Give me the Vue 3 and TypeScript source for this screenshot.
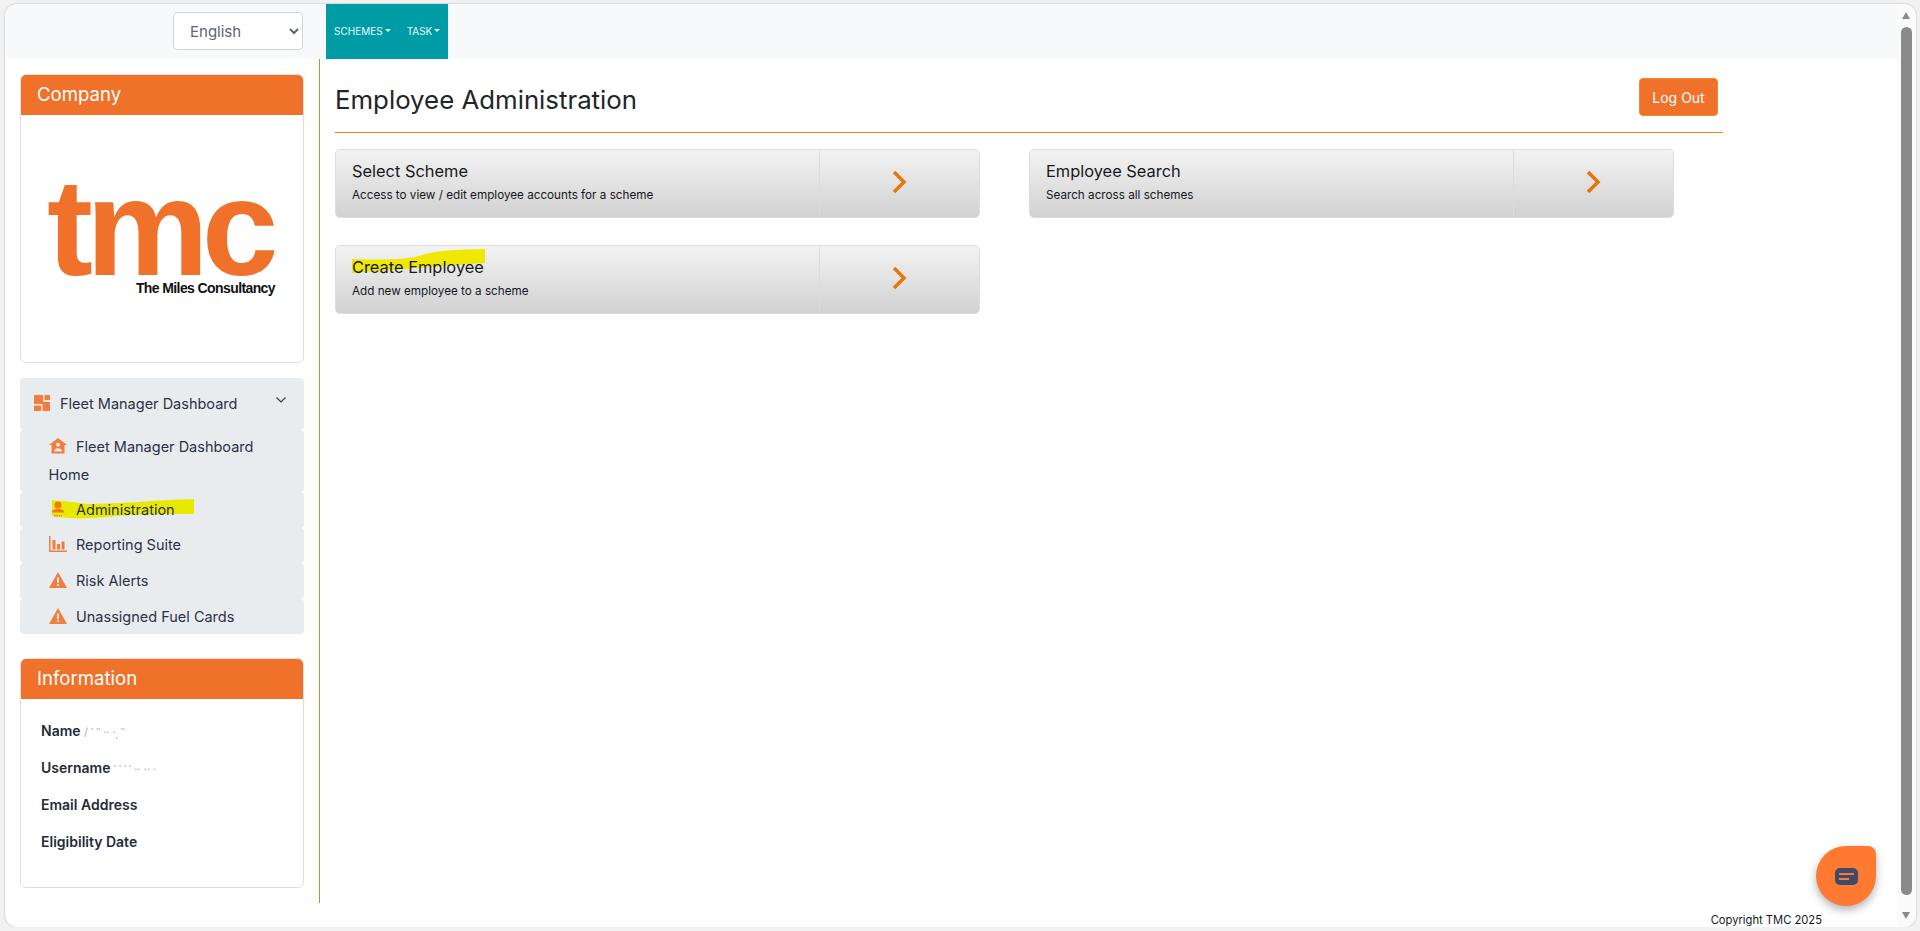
<script setup lang="ts">
interface Action { title: string; sub: string; highlight?: boolean }
const actions: Action[] = [
  { title: 'Select Scheme', sub: 'Access to view / edit employee accounts for a scheme' },
  { title: 'Employee Search', sub: 'Search across all schemes' },
  { title: 'Create Employee', sub: 'Add new employee to a scheme', highlight: true },
]
</script>

<template>
  <div class="window">
    <div class="page">
      <header class="navbar">
        <select class="lang"><option>English</option></select>
        <nav class="teal">
          <span class="nav-link">SCHEMES<i class="caret"></i></span>
          <span class="nav-link">TASK<i class="caret"></i></span>
        </nav>
      </header>

      <div class="body">
        <aside class="side">
          <section class="card">
            <h2 class="card-head">Company</h2>
            <div class="logo-body">
              <div class="logo">
                <div class="logo-mark">tmc</div>
                <div class="logo-tag">The Miles Consultancy</div>
              </div>
            </div>
          </section>

          <div class="menu">
            <div class="menu-head">
              <svg class="ico-head" viewBox="0 0 16 16"><path d="M0 0h9v9H0zM10.500 0H16v5h-5.500zM0 10.500h7V16H0zM8.500 7H16v9H8.500z" fill="#f47c3c"/></svg>
              <span class="menu-title">Fleet Manager Dashboard</span>
              <svg class="chev" viewBox="0 0 12 8"><path d="M1.500 1.500 6 6l4.500-4.500" fill="none" stroke="#343a40" stroke-width="1.100"/></svg>
            </div>
            <div class="item two">
              <svg class="ico" viewBox="0 0 18 16"><path fill="#f47c3c" fill-rule="evenodd" d="M9 0 18 7h-2.500v8.500h-13V7H0zM9 4.800a2 2 0 1 0 0 4 2 2 0 0 0 0-4zM5 13.500h8c0-2.200-2-3.300-4-3.300s-4 1.100-4 3.300z"/></svg>Fleet Manager Dashboard Home
            </div>
            <div class="item">
              <svg class="mark mark-admin" viewBox="0 0 142 20" preserveAspectRatio="none"><path fill="#e9e900" d="M0 1C15 2 25 4 35 5 70 5 100 1 142 0V15C105 15 80 15 55 18 35 20 15 20 0 17z"/></svg>
              <svg class="ico" viewBox="0 0 18 18"><circle cx="9" cy="4.500" r="4" fill="#f27a00"/><path fill="#f27a00" d="M2 13c.300-3 3.500-4 7-4s6.700 1 7 4z"/><path stroke="#f47c3c" stroke-width="1.600" stroke-dasharray="1.600 1" d="M4.500 16.500h9"/></svg><span class="over">Administration</span>
            </div>
            <div class="item">
              <svg class="ico" viewBox="0 0 18 16"><path fill="#f47c3c" d="M0 0h1.500v14.500H18V16H0zM3.500 4h3v9.500h-3zM8 8h3v5.500H8zM12.500 5.500h3v8h-3z"/></svg>Reporting Suite
            </div>
            <div class="item">
              <svg class="ico" viewBox="0 0 18 16"><path fill="#f47c3c" fill-rule="evenodd" d="M9 0l9 16H0zM8 5.500v5.500h2V5.500zM8 12v2h2v-2z"/></svg>Risk Alerts
            </div>
            <div class="item">
              <svg class="ico" viewBox="0 0 18 16"><path fill="#f47c3c" fill-rule="evenodd" d="M9 0l9 16H0zM8 5.500v5.500h2V5.500zM8 12v2h2v-2z"/></svg>Unassigned Fuel Cards
            </div>
          </div>

          <section class="card info">
            <h2 class="card-head">Information</h2>
            <div class="info-body">
              <div class="info-row">Name <span class="smudge">/ ˈ ˈˈ ·· ·ˌ ˈˈ</span></div>
              <div class="info-row">Username <span class="smudge">ˈ ˈ ˈ ˈ ·· ·· ·</span></div>
              <div class="info-row">Email Address</div>
              <div class="info-row">Eligibility Date</div>
            </div>
          </section>
        </aside>

        <main class="main">
          <div class="title-row">
            <h1 class="title">Employee Administration</h1>
            <button class="logout">Log Out</button>
          </div>
          <div class="grid">
            <div v-for="a in actions" :key="a.title" class="action">
              <div class="action-text">
                <div class="action-title">
                  <svg v-if="a.highlight" class="mark mark-create" viewBox="0 0 133 24" preserveAspectRatio="none"><path fill="#f0e800" d="M0 10C30 11 55 11 70 6 90 0 110 1 133 0v14L0 24z"/></svg>
                  <span class="over">{{ a.title }}</span>
                </div>
                <div class="action-sub">{{ a.sub }}</div>
              </div>
              <div class="action-go">
                <svg class="arrow" viewBox="0 0 15 24"><path d="M2 2l10 10L2 22" fill="none" stroke="#e8760a" stroke-width="3.600"/></svg>
              </div>
            </div>
          </div>
        </main>
      </div>

      <footer class="foot">Copyright TMC 2025</footer>
    </div>

    <div class="scroll">
      <i class="tri up"></i>
      <div class="thumb"></div>
      <i class="tri down"></i>
    </div>

    <button class="chat" aria-label="Chat">
      <svg viewBox="0 0 23 17" width="23" height="17"><rect width="23" height="17" rx="5" fill="#3d4a6b"/><path d="M4 6h15M4 11h10" stroke="#ff7a30" stroke-width="2"/></svg>
    </button>
  </div>
</template>

<style>
html, body { margin: 0; background: #f1f1f1; overflow: hidden; }
</style>

<style scoped>
* { box-sizing: border-box; }
.window {
  position: relative;
  display: flex;
  width: 1911px;
  height: 923px;
  margin: 4px 0 0 5px;
  background: #fff;
  border-radius: 12px;
  overflow: hidden;
  box-shadow: 0 0 2px rgba(0, 0, 0, .3);
  font-family: Inter, "Liberation Sans", sans-serif;
  color: #212529;
}
.page { flex: 1; min-width: 0; display: flex; flex-direction: column; }
.navbar { display: flex; height: 55px; flex: none; background: #f8f9fa; padding-left: 168px; align-items: center; }
.lang {
  width: 130px; height: 38px; margin: 0 23px 1px 0;
  padding-left: 12px;
  font: 15px Inter, sans-serif; color: #5c6670;
  background: #fff; border: 1px solid #ced4da; border-radius: 4px;
}
.teal { display: flex; align-self: stretch; width: 122px; background: #009ca6; align-items: center; padding: 0 0 2px 8px; gap: 16px; }
.nav-link { color: #e8fafa; font-size: 10px; white-space: nowrap; display: flex; align-items: center; }
.caret { display: inline-block; margin-left: 2px; border: 3px solid transparent; border-top-color: #e8fafa; border-bottom: 0; }

.body { flex: 1; min-height: 0; display: flex; }
.side { width: 315px; flex: none; padding: 15px 15px 0 15px; border-right: 1.500px solid #c98a3a; }
.card { border: 1px solid #dcdfe2; border-radius: 6px; height: 289px; overflow: hidden; background: #fff; }
.card-head { margin: 0; height: 40px; line-height: 39px; padding-left: 16px; background: #f0722a; color: #fff; font-size: 18.600px; font-weight: 400; }
.logo-body { height: 248px; display: flex; align-items: center; justify-content: center; }
.logo { width: 226px; text-align: right; }
.logo-mark { font: 700 138px/91px "Liberation Sans", sans-serif; letter-spacing: -7px; color: #f0722a; height: 98px; white-space: nowrap; margin-left: -2px; text-align: left; }
.logo-tag { font: 700 14px/16px "Liberation Sans", sans-serif; letter-spacing: -.6px; color: #111; white-space: nowrap; }

.menu { margin-top: 15px; font-size: 14.500px; line-height: 28px; color: #2b3245; }
.menu-head { height: 52px; display: flex; align-items: center; padding: 0 0 0 14px; background: #e9ecef; border-radius: 4px; position: relative; }
.ico-head { width: 16px; height: 16px; margin-right: 10px; margin-bottom: 2px; }
.menu-title { flex: 1; }
.chev { width: 12px; height: 8px; margin-right: 17px; margin-bottom: 8px; }
.item { position: relative; background: #e9ecef; border-radius: 4px; padding: 3.800px 30px 3.800px 28.500px; }
.item.two { padding-top: 3px; padding-bottom: 3px; }
.ico { width: 18px; height: 16px; margin-right: 9.500px; vertical-align: -2px; position: relative; }
.over { position: relative; }
.mark { position: absolute; }
.mark-admin { left: 32px; top: 7px; width: 142px; height: 20px; }

.info { margin-top: 24px; height: 230px; }
.info-body { padding: 14px 20px; }
.info-row { height: 37px; line-height: 36px; font-size: 14px; font-weight: 600; color: #252b3a; white-space: nowrap; }
.smudge { color: #a8adb8; font-weight: 400; font-size: 11px; }

.main { flex: 1; padding: 19px 0 0 15px; min-width: 0; }
.title-row { width: 1388px; height: 55px; display: flex; justify-content: space-between; align-items: flex-start; border-bottom: 1px solid #e08a1e; padding-right: 5px; }
.title { margin: 0; font-size: 25.800px; font-weight: 400; line-height: 36px; padding-top: 4px; color: #212529; }
.logout { width: 79px; height: 38px; background: #f0722a; color: #fff; border: 1px solid #ee8a2c; border-radius: 4px; font: 14px Inter, sans-serif; }
.grid { display: grid; grid-template-columns: 694px 694px; row-gap: 27px; margin-top: 16px; }
.action {
  width: 645px; height: 69px; display: flex;
  background: linear-gradient(#f3f3f3, #d1d1d1);
  border: 1px solid #dddddd; border-radius: 5px;
}
.action-text { flex: 1; padding: 10px 0 0 16px; }
.action-title { position: relative; font-size: 16.400px; line-height: 22px; color: #16181d; }
.mark-create { left: 0; top: -7px; width: 133px; height: 24px; }
.action-sub { font-size: 11.700px; line-height: 16px; margin-top: 5px; color: #16181d; }
.action-go { width: 160px; display: flex; align-items: center; justify-content: center; border-left: 1px solid #dcdcdc; }
.arrow { width: 15px; height: 24px; margin-bottom: 3px; }

.foot { height: 24px; flex: none; font-size: 11.200px; line-height: 22px; padding: 6px 75px 0 0; text-align: right; color: #16181d; }

.scroll { width: 19px; flex: none; background: #fafafa; position: relative; display: flex; flex-direction: column; align-items: flex-start; padding: 8px 0 0 4px; }
.thumb { width: 11px; height: 868px; margin: 8px 0 17px; background: #8a8a8a; border-radius: 6px; }
.tri { display: block; margin-left: 1px; border-left: 4.500px solid transparent; border-right: 4.500px solid transparent; }
.tri.up { border-bottom: 7px solid #8a8a8a; }
.tri.down { border-top: 7px solid #8a8a8a; }

.chat {
  position: absolute; left: 1811px; top: 842px; width: 60px; height: 60px;
  display: flex; align-items: center; justify-content: center; padding: 0; border: 0;
  background: #ff7a30; border-radius: 50% 8px 50% 50%;
  box-shadow: 0 4px 8px rgba(0, 0, 0, .3);
}
</style>
